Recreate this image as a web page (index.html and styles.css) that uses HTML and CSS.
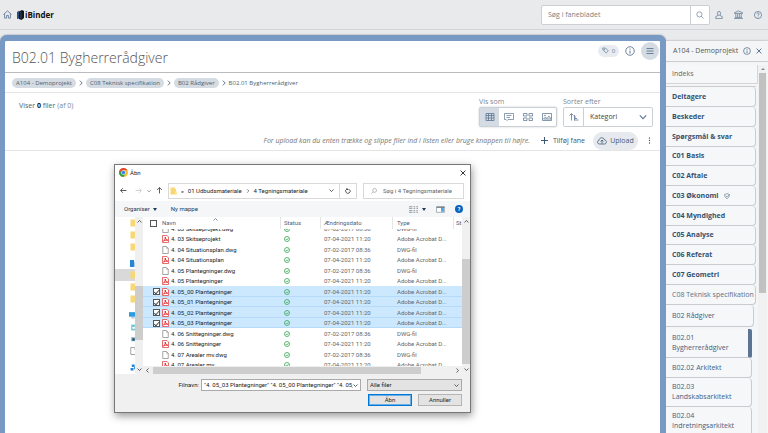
FILE: index.html
```html
<!DOCTYPE html>
<html lang="da">
<head>
<meta charset="utf-8">
<title>iBinder</title>
<link rel="stylesheet" href="styles.css">
</head>
<body>
<svg class="sprite" aria-hidden="true">
  <symbol id="pdf" viewBox="0 0 14 16"><path d="M1 1h9l3 3v11H1z" fill="#fff" stroke="#e2474a" stroke-width="1.6"/><path d="M3 12c2-1 4-5 3.500-8 0 3 2 6 5 6.500-3-.5-6 0-8.500 1.500" fill="none" stroke="#df2c30" stroke-width="2"/></symbol>
  <symbol id="doc" viewBox="0 0 14 16"><path d="M1.500 1h7.500l3.500 3.500v10.500h-11z" fill="#fff" stroke="#888" stroke-width="1.500"/><path d="M9 1v4h3.500" fill="none" stroke="#999"/></symbol>
  <symbol id="ok" viewBox="0 0 12 12"><circle cx="6" cy="6" r="5" fill="none" stroke="#35a653" stroke-width="1.600"/><path d="M3.500 6l2 2 3.200-3.500" fill="none" stroke="#35a653" stroke-width="1.600"/></symbol>
  <symbol id="folder" viewBox="0 0 14 16"><path d="M1 1h9v3h2v11H1z" fill="#f8d775"/><path d="M10 9h4v6h-4z" fill="#fbe6a2"/></symbol>
  <symbol id="down" viewBox="0 0 10 10"><path d="M1 3l4 4 4-4" fill="none" stroke="currentColor" stroke-width="1.400"/></symbol>
  <symbol id="right" viewBox="0 0 10 10"><path d="M3 1l4 4-4 4" fill="none" stroke="currentColor" stroke-width="1.400"/></symbol>
  <symbol id="info" viewBox="0 0 20 20"><circle cx="10" cy="10" r="8.500" fill="none" stroke="currentColor" stroke-width="1.800"/><path d="M10 5v2M10 9v6" stroke="currentColor" stroke-width="2"/></symbol>
  <symbol id="close" viewBox="0 0 10 10"><path d="M1 1l8 8M9 1L1 9" stroke="currentColor" stroke-width="1.500"/></symbol>
  <symbol id="search" viewBox="0 0 20 20"><circle cx="8.500" cy="8.500" r="6.500" fill="none" stroke="currentColor" stroke-width="1.600"/><path d="M13 13l6 6" stroke="currentColor" stroke-width="1.600"/></symbol>
  <symbol id="find" viewBox="0 0 20 20"><circle cx="12" cy="8" r="6.500" fill="none" stroke="currentColor" stroke-width="1.600"/><path d="M7 13l-6 6" stroke="currentColor" stroke-width="1.600"/></symbol>
</svg>

<header class="topbar">
  <a class="icon-link" href="#" aria-label="Hjem"><svg class="i9" viewBox="0 0 20 20" fill="none" stroke="currentColor" stroke-width="1.800"><path d="M1 10l9-8 9 8M3.500 8.500V18H8v-6h4v6h4.500V8.500"/></svg></a>
  <a class="logo" href="#"><svg class="logo-mark" viewBox="0 0 14 20"><path d="M0 4l5-3v16l-5 1z" fill="#2c4f82"/><path d="M4 3l6-3 4 2v14l-5 4-5-2z" fill="#11161d"/><path d="M4 3l4 2v14" fill="none" stroke="#4b6c9b"/></svg>iBinder</a>
  <form class="search">
    <input type="text" aria-label="Søg" placeholder="Søg i fanebladet">
    <button type="button" aria-label="Søg"><svg class="i8"><use href="#search"/></svg></button>
  </form>
  <nav class="top-icons">
    <button type="button" aria-label="Bruger"><svg class="i8" viewBox="0 0 20 20" fill="none" stroke="currentColor" stroke-width="1.800"><ellipse cx="10" cy="6" rx="4" ry="5"/><path d="M7.500 11L2 14v5h16v-5l-5.500-3"/></svg></button>
    <button type="button" aria-label="Organisation"><svg class="i9" viewBox="0 0 20 20" fill="none" stroke="currentColor" stroke-width="1.600"><path d="M1 6l9-4 9 4v1.500H1zM4 8v8M8 8v8M12 8v8M16 8v8M2 16.500h16M0 19h20"/></svg></button>
    <button type="button" aria-label="Hjælp"><svg class="i8" viewBox="0 0 20 20" fill="none" stroke="currentColor" stroke-width="1.800"><circle cx="10" cy="10" r="9"/><path d="M7 8c0-4 6-4 6-.5C13 10 10 9.500 10 12M10 14v2"/></svg></button>
  </nav>
</header>

<div class="layout">
<main class="binder">
  <div class="title-row">
    <h1>B02.01 Bygherrerådgiver</h1>
    <button class="tag" type="button"><svg class="i7" viewBox="0 0 20 20" fill="none" stroke="currentColor" stroke-width="2"><path d="M2 3h8l8 8-6 6-9-8z"/><circle cx="7" cy="7" r="1"/></svg>0</button>
    <button class="round" type="button" aria-label="Info"><svg class="i10"><use href="#info"/></svg></button>
    <button class="round menu" type="button" aria-label="Menu"><svg class="i8" viewBox="0 0 16 16" stroke="currentColor" stroke-width="1.800"><path d="M1 3h14M1 8h14M1 13h14"/></svg></button>
  </div>
  <nav class="crumbs">
    <a href="#">A104 - Demoprojekt</a><svg class="i6"><use href="#right"/></svg>
    <a href="#">C08 Teknisk specifikation</a><svg class="i6"><use href="#right"/></svg>
    <a href="#">B02 Rådgiver</a><svg class="i6"><use href="#right"/></svg>
    <span>B02.01 Bygherrerådgiver</span>
  </nav>
  <section class="controls">
    <p class="count">Viser <b>0</b> filer <span>(af 0)</span></p>
    <div class="control">
      <span class="caption">Vis som</span>
      <div class="views">
        <button class="on" type="button" aria-label="Tabel"><svg viewBox="0 0 20 16" fill="none" stroke="currentColor" stroke-width="1.600"><path d="M2 1h16v14H2zM2 5h16M2 10h16M7 1v14M13 1v14"/></svg></button>
        <button type="button" aria-label="Liste"><svg viewBox="0 0 20 16" fill="none" stroke="currentColor" stroke-width="1.400"><path d="M1 1h18v12H8l-2 2-2-2H1zM5 5h10M5 9h7"/></svg></button>
        <button type="button" aria-label="Kort"><svg viewBox="0 0 20 16" fill="none" stroke="currentColor" stroke-width="1.500"><path d="M1 1h7v5H1zM12 1h7v5h-7zM1 10h7v5H1zM12 10h7v5h-7z"/></svg></button>
        <button type="button" aria-label="Billeder"><svg viewBox="0 0 20 16" fill="none" stroke="currentColor" stroke-width="1.500"><path d="M1 1h18v14H1zM3 12l4-4 3 3 4-5 4 6z"/><circle cx="6" cy="5" r="1"/></svg></button>
      </div>
    </div>
    <div class="control">
      <label class="caption" for="sort">Sorter efter</label>
      <div class="sort">
        <button type="button" aria-label="Rækkefølge"><svg viewBox="0 0 20 16" fill="none" stroke="currentColor" stroke-width="1.600"><path d="M5 15V2M1 5l4-4 4 4M11 4v11M11 8h3M11 11h5M11 14h8"/></svg></button>
        <div class="select-wrap"><select id="sort"><option>Kategori</option></select><svg class="i8"><use href="#down"/></svg></div>
      </div>
    </div>
  </section>
  <section class="actions">
    <em>For upload kan du enten trække og slippe filer ind i listen eller bruge knappen til højre.</em>
    <button class="add" type="button"><svg class="i7" viewBox="0 0 10 10" stroke="currentColor" stroke-width="1.500"><path d="M5 0v10M0 5h10"/></svg>Tilføj fane</button>
    <button class="upload" type="button"><svg class="cloud" viewBox="0 0 20 16" fill="none" stroke="currentColor" stroke-width="1.600"><path d="M5 14C0 14 0 7 4 7c0-6 9-8 11-1 5 0 5 8 0 8zM10 13V6M7 9l3-3 3 3"/></svg>Upload</button>
    <button class="more" type="button" aria-label="Mere"><svg class="i7" viewBox="0 0 10 10" fill="currentColor"><circle cx="5" cy="1.500" r="1"/><circle cx="5" cy="5" r="1"/><circle cx="5" cy="8.500" r="1"/></svg></button>
  </section>
</main>

<aside class="side">
  <div class="side-head"><span>A104 - Demoprojekt</span><svg class="i8"><use href="#info"/></svg><button type="button" aria-label="Luk"><svg class="i6"><use href="#close"/></svg></button></div>
  <div class="side-body">
    <nav class="tabs">
      <a class="index" href="#">Indeks</a>
      <div class="group">
        <a href="#">Deltagere</a>
        <a href="#">Beskeder</a>
        <a href="#">Spørgsmål &amp; svar</a>
        <a href="#">C01 Basis</a>
        <a href="#">C02 Aftale</a>
        <a href="#">C03 Økonomi <svg class="i6" viewBox="0 0 20 20" fill="none" stroke="currentColor" stroke-width="1.600"><path d="M2 5l8-3 8 3c0 7-3 11-8 14C5 16 2 12 2 5zM6 9l4 4 8-8"/></svg></a>
        <a href="#">C04 Myndighed</a>
        <a href="#">C05 Analyse</a>
        <a href="#">C06 Referat</a>
        <a href="#">C07 Geometri</a>
        <a class="open" href="#">C08 Teknisk specifikation</a>
      </div>
      <a class="sub" href="#">B02 Rådgiver</a>
      <div class="leaves">
        <a class="current" href="#">B02.01 Bygherrerådgiver</a>
        <a href="#">B02.02 Arkitekt</a>
        <a href="#">B02.03 Landskabsarkitekt</a>
        <a href="#">B02.04 Indretningsarkitekt</a>
      </div>
    </nav>
    <div class="side-scroll"><span class="arrow"></span><span class="thumb"></span></div>
  </div>
</aside>
</div>

<div class="dialog" role="dialog" aria-label="Åbn">
  <div class="dlg-title">
    <svg class="i9" viewBox="0 0 20 20"><circle cx="10" cy="10" r="10" fill="#f3bd2c"/><path d="M1.300 5A10 10 0 0 1 18.700 5H10L6 13z" fill="#df4335"/><path d="M1.300 5A10 10 0 0 0 10 20l4-8H6z" fill="#2f9e4f"/><circle cx="10" cy="10" r="5" fill="#fff"/><circle cx="10" cy="10" r="3.800" fill="#3f7de8"/></svg>
    <span>Åbn</span>
    <button type="button" aria-label="Luk"><svg class="i6"><use href="#close"/></svg></button>
  </div>
  <div class="address">
    <button type="button" aria-label="Tilbage"><svg class="i7" viewBox="0 0 12 12" fill="none" stroke="currentColor" stroke-width="1.500"><path d="M11 6H1M5 2L1 6l4 4"/></svg></button>
    <button class="faded" type="button" aria-label="Frem"><svg class="i7" viewBox="0 0 12 12" fill="none" stroke="currentColor" stroke-width="1.500"><path d="M1 6h10M7 2l4 4-4 4"/></svg></button>
    <button class="recent" type="button" aria-label="Seneste"><svg class="i4"><use href="#down"/></svg></button>
    <button type="button" aria-label="Op"><svg class="i7" viewBox="0 0 12 12" fill="none" stroke="currentColor" stroke-width="1.500"><path d="M6 11V1M2 5l4-4 4 4"/></svg></button>
    <div class="path"><svg class="fold"><use href="#folder"/></svg><span>«</span><span>01 Udbudsmateriale</span><svg class="i4"><use href="#right"/></svg><span>4 Tegningsmateriale</span><svg class="i5 drop"><use href="#down"/></svg><button type="button" aria-label="Opdater"><svg class="i6" viewBox="0 0 12 12" fill="none" stroke="currentColor" stroke-width="1.500"><path d="M9 3a4.500 4.500 0 1 1-5-1M4 0v3h3"/></svg></button></div>
    <label class="find"><svg class="i6"><use href="#find"/></svg><input type="text" aria-label="Søg i mappe" placeholder="Søg i 4 Tegningsmateriale"></label>
  </div>
  <div class="toolbar">
    <button type="button">Organiser <span class="tri"></span></button>
    <button type="button">Ny mappe</button>
    <button class="push" type="button" aria-label="Visning"><svg class="list-ic" viewBox="0 0 16 12" stroke="#8c959c" stroke-width="1.600"><path d="M0 1h6M0 4h6M0 8h6M0 11h6M8 1h3M13 1h3M8 4h3M13 4h3M8 8h3M13 8h3M8 11h3M13 11h3"/></svg><span class="tri"></span></button>
    <button type="button" aria-label="Eksempelrude"><svg class="list-ic" viewBox="0 0 16 12"><path d="M1 1h14v10H1z" fill="#fff" stroke="#6f7880"/><path d="M9 2h5v8H9z" fill="#45a7e8"/><path d="M1 1h14v2H1z" fill="#6f7880"/></svg></button>
    <button class="help" type="button">?</button>
  </div>
  <div class="browser">
    <div class="tree">
      <div><svg class="fold"><use href="#folder"/></svg></div>
      <div><svg class="fold"><use href="#folder"/></svg></div>
      <div><svg class="fold"><use href="#folder"/></svg></div>
      <div class="gap"></div>
      <div><svg class="i7" viewBox="0 0 12 12" fill="#2786d3"><path d="M0 0h7v12H0zM8 4h4v8H8z"/></svg></div>
      <div class="sel"><svg class="fold"><use href="#folder"/></svg></div>
      <div><svg class="fold"><use href="#folder"/></svg></div>
      <div><svg class="fold"><use href="#folder"/></svg></div>
      <div class="gap"></div>
      <div><svg class="i8" viewBox="0 0 14 12"><path d="M0 1h14v8H0z" fill="#2c9cdf"/><path d="M4 11h6" stroke="#567"/></svg></div>
      <div><svg class="i7" viewBox="0 0 12 12"><path d="M2 1h10v10H2z" fill="#70cbd1"/><path d="M4 5h8v3H4z" fill="#fff"/></svg></div>
      <div><svg class="i7" viewBox="0 0 12 12"><path d="M2 2h10v7H2z" fill="#8eb0c7"/><path d="M4 4h4v4H4z" fill="#24516f"/></svg></div>
      <div><svg class="fold"><use href="#doc"/></svg></div>
      <div class="gap"></div>
      <div><svg class="i7" viewBox="0 0 12 12" fill="#2384d8"><path d="M3 1h5v4H3zM1 7h5v4H1zM7 5h5v4H7z"/></svg></div>
    </div>
    <div class="vscroll tree-scroll"><svg class="i5"><use href="#down"/></svg><span></span><svg class="i5"><use href="#down"/></svg></div>
    <div class="files">
      <div class="cols"><span class="c-check"><input type="checkbox" aria-label="Vælg alle"></span><span class="c-name">Navn<svg class="i5 asc"><use href="#down"/></svg></span><span class="c-status">Status</span><span class="c-date">Ændringsdato</span><span class="c-type">Type</span><span class="c-size">St</span></div>
      <div class="rows">
        <table>
          <tr><td></td><td><svg class="fi"><use href="#doc"/></svg>4. 03 Skitseprojekt.dwg</td><td><svg class="i6"><use href="#ok"/></svg></td><td>07-02-2017 08:36</td><td>DWG-fil</td></tr>
          <tr><td></td><td><svg class="fi"><use href="#pdf"/></svg>4. 03 Skitseprojekt</td><td><svg class="i6"><use href="#ok"/></svg></td><td>07-04-2021 11:20</td><td>Adobe Acrobat D...</td></tr>
          <tr><td></td><td><svg class="fi"><use href="#doc"/></svg>4. 04 Situationsplan.dwg</td><td><svg class="i6"><use href="#ok"/></svg></td><td>07-02-2017 08:36</td><td>DWG-fil</td></tr>
          <tr><td></td><td><svg class="fi"><use href="#pdf"/></svg>4. 04 Situationsplan</td><td><svg class="i6"><use href="#ok"/></svg></td><td>07-04-2021 11:20</td><td>Adobe Acrobat D...</td></tr>
          <tr><td></td><td><svg class="fi"><use href="#doc"/></svg>4. 05 Plantegninger.dwg</td><td><svg class="i6"><use href="#ok"/></svg></td><td>07-02-2017 08:36</td><td>DWG-fil</td></tr>
          <tr><td></td><td><svg class="fi"><use href="#pdf"/></svg>4. 05 Plantegninger</td><td><svg class="i6"><use href="#ok"/></svg></td><td>07-04-2021 11:20</td><td>Adobe Acrobat D...</td></tr>
          <tr class="sel"><td><input type="checkbox" aria-label="Vælg" checked></td><td><svg class="fi"><use href="#pdf"/></svg>4. 05_00 Plantegninger</td><td><svg class="i6"><use href="#ok"/></svg></td><td>07-04-2021 11:20</td><td>Adobe Acrobat D...</td></tr>
          <tr class="sel"><td><input type="checkbox" aria-label="Vælg" checked></td><td><svg class="fi"><use href="#pdf"/></svg>4. 05_01 Plantegninger</td><td><svg class="i6"><use href="#ok"/></svg></td><td>07-04-2021 11:20</td><td>Adobe Acrobat D...</td></tr>
          <tr class="sel"><td><input type="checkbox" aria-label="Vælg" checked></td><td><svg class="fi"><use href="#pdf"/></svg>4. 05_02 Plantegninger</td><td><svg class="i6"><use href="#ok"/></svg></td><td>07-04-2021 11:20</td><td>Adobe Acrobat D...</td></tr>
          <tr class="sel"><td><input type="checkbox" aria-label="Vælg" checked></td><td><svg class="fi"><use href="#pdf"/></svg>4. 05_03 Plantegninger</td><td><svg class="i6"><use href="#ok"/></svg></td><td>07-04-2021 11:20</td><td>Adobe Acrobat D...</td></tr>
          <tr><td></td><td><svg class="fi"><use href="#doc"/></svg>4. 06 Snittegninger.dwg</td><td><svg class="i6"><use href="#ok"/></svg></td><td>07-02-2017 08:36</td><td>DWG-fil</td></tr>
          <tr><td></td><td><svg class="fi"><use href="#pdf"/></svg>4. 06 Snittegninger</td><td><svg class="i6"><use href="#ok"/></svg></td><td>07-04-2021 11:20</td><td>Adobe Acrobat D...</td></tr>
          <tr><td></td><td><svg class="fi"><use href="#doc"/></svg>4. 07 Arealer mv.dwg</td><td><svg class="i6"><use href="#ok"/></svg></td><td>07-02-2017 08:36</td><td>DWG-fil</td></tr>
          <tr><td></td><td><svg class="fi"><use href="#pdf"/></svg>4. 07 Arealer mv.</td><td><svg class="i6"><use href="#ok"/></svg></td><td>07-04-2021 11:20</td><td>Adobe Acrobat D...</td></tr>
        </table>
      </div>
      <div class="hscroll"><svg class="i5 flip"><use href="#right"/></svg><span></span><svg class="i5"><use href="#right"/></svg></div>
    </div>
    <div class="vscroll file-scroll"><svg class="i5"><use href="#down"/></svg><span></span><svg class="i5"><use href="#down"/></svg></div>
  </div>
  <div class="foot">
    <div class="foot-row">
      <label for="fname">Filnavn:</label>
      <div class="fname"><input id="fname" type="text" value='"4. 05_03 Plantegninger" "4. 05_00 Plantegninger" "4. 05_01 Plantegninger"'><svg class="i5"><use href="#down"/></svg></div>
      <div class="ftype"><select aria-label="Filtype"><option>Alle filer</option></select><svg class="i5"><use href="#down"/></svg></div>
    </div>
    <div class="foot-row">
      <button class="primary" type="button">Åbn</button>
      <button type="button">Annuller</button>
    </div>
  </div>
</div>
</body>
</html>
```
FILE: styles.css
```css
* { box-sizing: border-box; }
body { margin: 0; min-height: 100vh; display: flex; flex-direction: column; background: #e9eaec; color: #4f5f70; font: 7px/10px "Open Sans", sans-serif; overflow: hidden; }
button, input, select { font: inherit; color: inherit; border: 0; background: none; padding: 0; margin: 0; min-width: 0; border-radius: 0; }
button { display: flex; align-items: center; justify-content: center; white-space: nowrap; }
select { appearance: none; }
a { color: inherit; text-decoration: none; }
svg { display: block; flex: none; }
.sprite { position: absolute; width: 0; height: 0; }
.i4 { width: 4px; height: 4px; }
.i5 { width: 5px; height: 5px; }
.i6 { width: 6px; height: 6px; }
.i7 { width: 7px; height: 7px; }
.i8 { width: 8px; height: 8px; }
.i9 { width: 9px; height: 9px; }
.i10 { width: 10px; height: 10px; }

.topbar { height: 30px; display: flex; align-items: center; padding: 0 6px 0 3px; border-bottom: 1px solid #d3d4d6; color: #5c7693; }
.icon-link { margin-right: 5px; }
.logo { display: flex; align-items: center; gap: 1px; color: #111; font-weight: 700; font-size: 8px; }
.logo-mark { width: 7px; height: 10px; }
.search { margin-left: auto; display: flex; width: 169px; height: 20px; border: 1px solid #cbd0d5; border-radius: 2px; background: #fff; }
.search input { flex: 1; padding: 0 6px; }
.search input::placeholder { color: #7d7d7d; opacity: 1; }
.search button { width: 19px; border-left: 1px solid #cbd0d5; }
.top-icons { display: flex; gap: 11px; margin-left: 5px; }

.layout { flex: 1; display: flex; padding-top: 5px; }
.binder { flex: 1; min-width: 0; border: solid #7899c4; border-width: 6px 6px 0 5px; border-radius: 7px 7px 0 0; background: #fff; box-shadow: 0 0 2px #7f8791; }
.title-row { height: 32px; display: flex; align-items: center; gap: 6px; padding: 0 1px 12px 7px; border-bottom: 1px solid #bbb; }
h1 { margin: 14px auto 0 0; font-size: 14px; line-height: 20px; font-weight: 300; color: #555; }
.tag { height: 12px; width: 21px; gap: 3px; border-radius: 6px; background: #e8ecf0; font-size: 6px; color: #5c7693; }
.round { width: 10px; height: 18px; color: #5c7693; }
.menu { width: 18px; border-radius: 9px; background: #d5dbe2; }
.crumbs { height: 20px; display: flex; align-items: center; gap: 2px; padding: 0 7px; border-bottom: 1px solid #e5e5e5; font-size: 6px; }
.crumbs a { padding: 0 4px; border-radius: 5px; line-height: 10px; background: #d5dbe2; }
.controls { height: 38px; display: flex; align-items: flex-start; gap: 6px; padding: 2px 7px 0 14px; }
.count { margin: 6px auto 0 0; }
.count b { color: #111; }
.count span, .caption { color: #7c8794; }
.caption { display: block; line-height: 11px; padding-top: 1px; }
.views, .sort { display: flex; height: 20px; border: 1px solid #cbd0d5; border-radius: 2px; background: #fff; color: #5c7693; }
.views { width: 78px; box-shadow: 0 0 2px #c2c7cc; }
.views button { flex: 1; }
.views svg, .sort button svg { width: 10px; height: 8px; }
.views .on { background: #d5dbe2; }
.sort { width: 90px; }
.sort button { width: 20px; border-right: 1px solid #cbd0d5; }
.select-wrap { flex: 1; display: flex; align-items: center; padding: 0 5px 0 6px; }
.select-wrap select { flex: 1; color: #444; }
.actions { height: 20px; display: flex; align-items: center; justify-content: flex-end; border-bottom: 1px solid #e5e5e5; padding-right: 7px; color: #3f5873; }
.actions em { color: #777; margin-right: 11px; }
.add { gap: 5px; margin-right: 8px; }
.upload { height: 18px; width: 45px; gap: 3px; border-radius: 9px; background: #e6eaee; }
.cloud { width: 10px; height: 8px; }
.more { margin-left: 8px; }

.side { width: 102px; margin-top: 6px; background: #f4f5f6; color: #456080; box-shadow: 0 0 2px #999; display: flex; flex-direction: column; }
.side-head { height: 21px; display: flex; align-items: center; gap: 5px; padding: 0 6px 0 7px; border-bottom: 1px solid #ccc; color: #555; white-space: nowrap; }
.side-head svg { color: #4a6889; }
.side-head button { margin-left: auto; }
.side-body { flex: 1; display: flex; padding: 3px 1px 0 0; }
.tabs { flex: 1; min-width: 0; }
.tabs a { display: flex; align-items: center; gap: 6px; padding: 0 6px; background: #f5f7f9; border: 1px solid #c9cbce; border-width: 0 1px 1px 0; border-radius: 0 4px 4px 0; }
.tabs .index { height: 19px; border-color: #d5d5d5; border-radius: 0; margin-bottom: 2px; color: #666; }
.group { border-top: 1px solid #c9cbce; margin-right: 2px; }
.tabs .group a { height: 20px; font-weight: 700; color: #35516f; }
.tabs .group a:nth-child(4n) { height: 19px; }
.tabs .group .open { font-weight: 400; color: #5c7086; white-space: nowrap; }
.tabs .sub { height: 22px; margin-right: 4px; }
.leaves { margin: 2px 6px 0 0; }
.tabs .leaves a { min-height: 20px; padding-top: 4px; padding-bottom: 4px; }
.tabs .leaves .current { border-right: 4px solid #5b7493; border-radius: 0 2px 2px 0; }
.side-scroll { width: 9px; background: #f1f1f1; display: flex; flex-direction: column; align-items: center; padding: 3px 0; gap: 3px; }
.arrow { border: 2px solid transparent; border-top: 0; border-bottom-color: #888; }
.thumb { width: 7px; height: 220px; background: #c1c1c1; }

.dialog { position: absolute; left: 114px; top: 164px; width: 357px; border: 1px solid #777; background: #fff; box-shadow: 1px 3px 8px #999; font: 6px/10px Roboto, sans-serif; color: #222; }
.dlg-title { height: 15px; display: flex; align-items: center; gap: 2px; padding: 0 4px; }
.dlg-title button { margin-left: auto; }
.address { height: 21px; display: flex; align-items: center; padding: 0 6px 0 2px; }
.address > button { width: 13px; margin-right: 2px; color: #444; }
.address .faded { color: #ccc; margin-right: 0; }
.address .recent { width: 8px; margin-right: 0; }
.path, .find { display: flex; align-items: center; height: 16px; border: 1px solid #d9d9d9; white-space: nowrap; }
.path { flex: 1; gap: 4px; padding-left: 1px; }
.fold { width: 7px; height: 8px; }
.drop { margin-left: auto; margin-right: 1px; }
.path button { width: 17px; height: 14px; border-left: 1px solid #d9d9d9; }
.find { width: 101px; margin-left: 6px; padding-left: 7px; gap: 6px; color: #777; }
.find input { flex: 1; }
.find input::placeholder { color: #666; opacity: 1; }
.toolbar { height: 16px; display: flex; align-items: center; gap: 14px; padding: 0 7px 0 9px; background: #f4f6f7; color: #1e395b; }
.toolbar button { gap: 3px; }
.tri { border: 2px solid transparent; border-top: 3px solid #1e395b; border-bottom: 0; }
.toolbar .push { margin-left: auto; gap: 4px; margin-right: -4px; }
.toolbar .push + button { margin-right: -4px; }
.list-ic { width: 9px; height: 7px; }
.toolbar .help { width: 8px; height: 8px; border-radius: 50%; background: #0a63bd; color: #fff; font-weight: 700; }
.browser { display: flex; height: 157px; overflow: hidden; }
.tree { width: 20px; }
.tree div { height: 12px; display: flex; align-items: center; justify-content: flex-end; overflow: hidden; }
.tree div svg { margin-right: -2px; }
.tree .gap { height: 4px; }
.tree .sel { background: #d9d9d9; }
.vscroll { width: 8px; display: flex; flex-direction: column; align-items: center; justify-content: space-between; padding: 2px 0; background: #f0f0f0; }
.vscroll span { flex: 1; width: 8px; background: #cdcdcd; }
.vscroll svg:first-child, .asc { transform: rotate(180deg); }
.tree-scroll span { margin: 62px 0 27px; }
.file-scroll span { margin: 35px 0 3px; }
.files { flex: 1; min-width: 0; display: flex; flex-direction: column; }
.cols { display: flex; height: 12px; line-height: 12px; color: #4d6180; }
.cols span { border-right: 1px solid #e5e5e5; padding-left: 4px; }
.cols .c-check { width: 19px; border: 0; padding: 3px 0 0 7px; }
.cols .c-name { width: 119px; padding-left: 0; display: flex; }
.asc { margin-left: 37px; }
.cols .c-status { width: 40px; padding-left: 3px; }
.cols .c-date { width: 72px; padding-left: 3px; }
.cols .c-type { width: 61px; }
.cols .c-size { border: 0; padding-left: 2px; }
input[type="checkbox"] { appearance: none; width: 7px; height: 7px; border: 1px solid #555; background: #fff; display: flex; justify-content: center; }
input:checked::before { content: ""; width: 2px; height: 4px; border: solid #555; border-width: 0 1px 1px 0; transform: rotate(40deg); }
.rows { flex: 1; overflow: hidden; display: flex; align-items: flex-start; }
table { width: 100%; table-layout: fixed; border-collapse: collapse; margin-top: -6px; color: #666; }
tr { height: 11px; }
tr:nth-child(even) { height: 10px; }
td { padding: 0; line-height: 8px; white-space: nowrap; vertical-align: middle; }
td:nth-child(1) { width: 19px; padding-left: 10px; }
td:nth-child(2) { width: 122px; color: #222; }
td:nth-child(3) { width: 40px; }
td:nth-child(4) { width: 73px; }
tr.sel td { background: #cce8ff; box-shadow: inset 0 -1px #b5dafa; }
.fi { width: 7px; height: 8px; float: left; margin-right: 2px; }
.hscroll { height: 8px; display: flex; align-items: center; justify-content: space-between; padding: 0 2px; background: #f0f0f0; }
.hscroll span { flex: 1; height: 7px; margin: 0 34px 0 3px; background: #cdcdcd; }
.flip { transform: rotate(180deg); }
.foot { background: #f0f0f0; padding: 5px 8px 6px; display: flex; flex-direction: column; gap: 3px; }
.foot-row { display: flex; align-items: center; justify-content: flex-end; gap: 6px; height: 12px; }
.foot-row label { margin-right: -4px; }
.fname, .ftype { height: 12px; display: flex; align-items: center; border: 1px solid #aaa; background: #fff; padding: 0 2px; }
.fname { width: 160px; }
.fname input, .ftype select { flex: 1; }
.ftype { width: 95px; background: #e3e3e3; }
.foot-row button { width: 44px; height: 12px; border: 1px solid #b5b5b5; background: #e3e3e3; }
.foot-row .primary { border-color: #0078d7; outline: 1px solid #69aee4; outline-offset: -2px; }
```
